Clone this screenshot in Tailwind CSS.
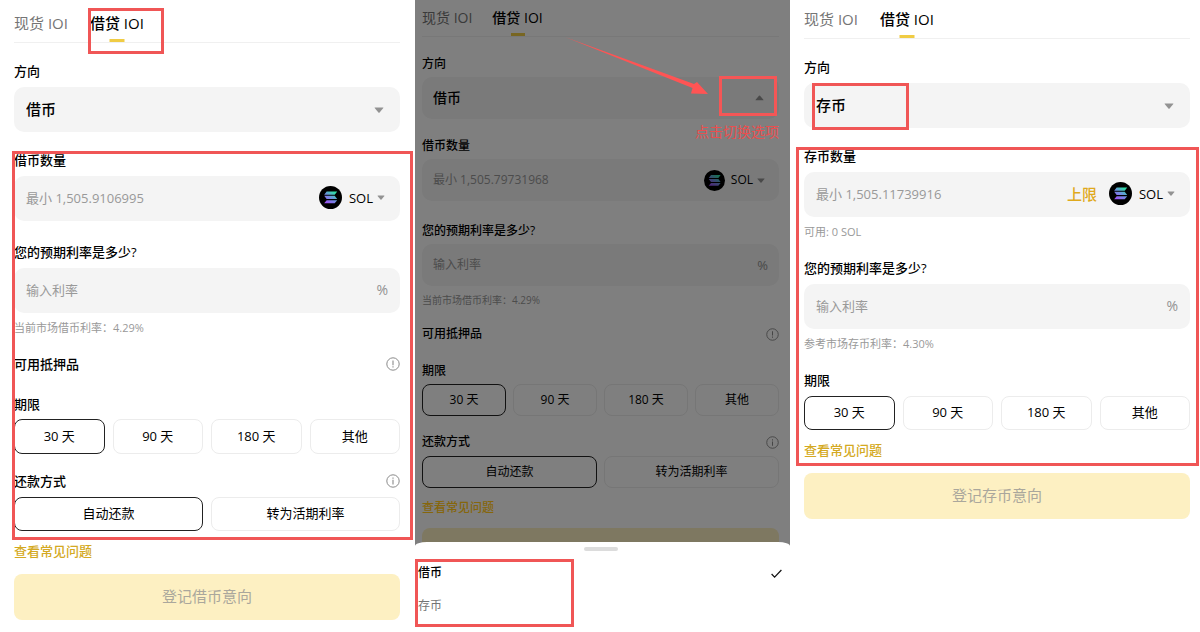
<!DOCTYPE html>
<html lang="zh-CN">
<head>
<meta charset="utf-8">
<meta name="viewport" content="width=device-width, initial-scale=1">
<title>借贷 IOI</title>
<script src="https://cdn.jsdelivr.net/npm/@tailwindcss/browser@4"></script>
</head>
<body class="bg-white font-['Open_Sans','Noto_Sans_CJK_SC',sans-serif] text-[13px] leading-5 text-black">
<svg class="absolute size-0" aria-hidden="true">
  <defs>
    <linearGradient id="sol" gradientUnits="userSpaceOnUse" x1="7" y1="19" x2="17" y2="5">
      <stop offset="0.05" stop-color="#a04df5"/><stop offset="0.5" stop-color="#6f8fe0"/><stop offset="0.9" stop-color="#2fe0a6"/>
    </linearGradient>
    <symbol id="sol-logo" viewBox="0 0 24 24">
      <circle cx="12" cy="12" r="12" fill="#000"/>
      <path fill="url(#sol)" d="M8 5.8h11l-2.6 3.3h-11zM5.4 10.3h11l2.6 3.3H8zM8 14.8h11l-2.6 3.3h-11z"/>
    </symbol>
    <symbol id="caret" viewBox="0 0 10 6"><path d="M1 0.4h8q.7 0 .3.6L5.6 5.5q-.6.6-1.2 0L.7 1Q.3.4 1 .4z" fill="#929292"/></symbol>
    <symbol id="alert" viewBox="0 0 14 14"><circle cx="7" cy="7" r="6.2" fill="none" stroke="#8a8a8a"/><path d="M7 3.6v4.6M7 9.2v1.3" stroke="#8a8a8a" stroke-width="1.1"/></symbol>
    <symbol id="info" viewBox="0 0 14 14"><circle cx="7" cy="7" r="6.2" fill="none" stroke="#8a8a8a"/><path d="M7 3.5v1.3M7 5.8v4.6" stroke="#8a8a8a" stroke-width="1.1"/></symbol>
  </defs>
</svg>

<main class="grid min-h-screen grid-cols-[415fr_375fr_410fr]">

  <!-- Borrow form -->
  <section class="relative flex flex-col pr-[15px] pb-3 pl-[14px]">
    <nav class="flex gap-[22px] border-b border-[#f0f0f0] pt-[13px] text-[15px]">
      <button class="pb-[9px] text-[#757575]">现货 IOI</button>
      <button class="relative pb-[9px] font-medium">借贷 IOI<span class="absolute bottom-0 left-1/2 h-[3px] w-[15px] -translate-x-1/2 bg-[#f0cc44]"></span></button>
    </nav>

    <label for="dir1" class="mt-[18px] font-medium">方向</label>
    <div class="relative mt-[6px] flex">
      <select id="dir1" class="h-[45px] w-full appearance-none rounded-[10px] bg-[#f4f4f4] px-3 pb-0.5 text-[15px] font-medium"><option>借币</option><option>存币</option></select>
      <svg class="pointer-events-none absolute top-5 right-[16px] h-[6px] w-[10px]"><use href="#caret"/></svg>
    </div>

    <label for="amt1" class="mt-[18px] font-medium">借币数量</label>
    <div class="mt-[6px] flex h-[45px] items-center rounded-[10px] bg-[#f4f4f4] pr-[15px] pb-0.5 pl-3">
      <input id="amt1" class="min-w-0 flex-1 bg-transparent outline-none placeholder:text-[#999]" placeholder="最小 1,505.9106995">
      <button class="flex items-center font-medium"><svg class="mr-[7px] size-[23px]"><use href="#sol-logo"/></svg>SOL<svg class="ml-1 h-[5px] w-2"><use href="#caret"/></svg></button>
    </div>

    <label for="rate1" class="mt-[21px] font-medium">您的预期利率是多少?</label>
    <div class="mt-[6px] flex h-[45px] items-center rounded-[10px] bg-[#f4f4f4] px-3 pb-0.5 text-[#929292]">
      <input id="rate1" class="min-w-0 flex-1 bg-transparent outline-none placeholder:text-[#999]" placeholder="输入利率"><span class="text-[14px]">%</span>
    </div>
    <p class="mt-[7px] text-[11px] leading-4 text-[#999]">当前市场借币利率：4.29%</p>

    <div class="mt-[18px] flex items-center justify-between font-medium">可用抵押品<button aria-label="抵押品说明"><svg class="size-[14px]"><use href="#alert"/></svg></button></div>

    <h2 class="mt-5 font-medium">期限</h2>
    <div class="mt-[5px] grid grid-cols-4 gap-2">
      <button class="h-[35px] rounded-lg border border-[#222] pb-0.5">30 天</button>
      <button class="h-[35px] rounded-lg border border-[#ececec] pb-0.5">90 天</button>
      <button class="h-[35px] rounded-lg border border-[#ececec] pb-0.5">180 天</button>
      <button class="h-[35px] rounded-lg border border-[#ececec] pb-0.5">其他</button>
    </div>

    <div class="mt-[17px] flex items-center justify-between font-medium">还款方式<button aria-label="还款方式说明"><svg class="size-[14px]"><use href="#info"/></svg></button></div>
    <div class="mt-[6px] grid grid-cols-2 gap-2">
      <button class="h-[34px] rounded-lg border border-[#222] pb-0.5">自动还款</button>
      <button class="h-[34px] rounded-lg border border-[#ececec] pb-0.5">转为活期利率</button>
    </div>

    <a href="#" class="mt-[10px] self-start font-medium text-[#d4a922]">查看常见问题</a>
    <button class="mt-[13px] h-[46px] rounded-lg bg-[#fdf0c2] pb-0.5 text-[15px] text-[#aaa79c]">登记借币意向</button>

    <div class="pointer-events-none absolute top-2 left-[88px] h-[46px] w-[76px] border-3 border-[#f05656]"></div>
    <div class="pointer-events-none absolute top-[151px] right-[2px] left-3 h-[389px] border-3 border-[#f05656]"></div>
  </section>

  <!-- Borrow form behind the direction sheet -->
  <section class="relative overflow-hidden text-[12px]">
    <div class="flex flex-col pr-[11px] pl-[7px]">
      <nav class="flex gap-5 border-b border-[#f0f0f0] pt-2 text-[14px] leading-5">
        <button class="pb-2 text-[#757575]">现货 IOI</button>
        <button class="relative pb-2 font-medium">借贷 IOI<span class="absolute bottom-0 left-1/2 h-[3px] w-[14px] -translate-x-1/2 bg-[#f0cc44]"></span></button>
      </nav>

      <label for="dir2" class="mt-[17px] leading-5 font-medium">方向</label>
      <div class="relative mt-[3px] flex">
        <select id="dir2" class="h-[42px] w-full appearance-none rounded-[10px] bg-[#f4f4f4] px-[11px] text-[14px] font-medium"><option>借币</option><option>存币</option></select>
        <svg class="pointer-events-none absolute top-[18px] right-[15px] h-[6px] w-[9px] rotate-180"><use href="#caret"/></svg>
      </div>

      <label for="amt2" class="mt-[17px] leading-5 font-medium">借币数量</label>
      <div class="mt-[3px] flex h-[42px] items-center rounded-[10px] bg-[#f4f4f4] pr-[14px] pl-[11px]">
        <input id="amt2" class="min-w-0 flex-1 bg-transparent outline-none placeholder:text-[#999]" placeholder="最小 1,505.79731968">
        <button class="flex items-center font-medium"><svg class="mr-[6px] size-[21px]"><use href="#sol-logo"/></svg>SOL<svg class="ml-1 h-[5px] w-2"><use href="#caret"/></svg></button>
      </div>

      <label for="rate2" class="mt-5 leading-5 font-medium">您的预期利率是多少?</label>
      <div class="mt-[3px] flex h-[42px] items-center rounded-[10px] bg-[#f4f4f4] px-[11px] text-[#929292]">
        <input id="rate2" class="min-w-0 flex-1 bg-transparent outline-none placeholder:text-[#999]" placeholder="输入利率"><span class="text-[13px]">%</span>
      </div>
      <p class="mt-[6px] text-[10px] leading-4 text-[#999]">当前市场借币利率：4.29%</p>

      <div class="mt-4 flex items-center justify-between leading-5 font-medium">可用抵押品<button aria-label="抵押品说明"><svg class="size-[13px]" viewBox="0 0 14 14"><use href="#alert"/></svg></button></div>

      <h2 class="mt-[17px] leading-5 font-medium">期限</h2>
      <div class="mt-[3px] grid grid-cols-4 gap-[7px]">
        <button class="h-8 rounded-lg border border-[#222]">30 天</button>
        <button class="h-8 rounded-lg border border-[#ececec]">90 天</button>
        <button class="h-8 rounded-lg border border-[#ececec]">180 天</button>
        <button class="h-8 rounded-lg border border-[#ececec]">其他</button>
      </div>

      <div class="mt-4 flex items-center justify-between leading-5 font-medium">还款方式<button aria-label="还款方式说明"><svg class="size-[13px]" viewBox="0 0 14 14"><use href="#info"/></svg></button></div>
      <div class="mt-1 grid grid-cols-2 gap-[7px]">
        <button class="h-8 rounded-lg border border-[#222]">自动还款</button>
        <button class="h-8 rounded-lg border border-[#ececec]">转为活期利率</button>
      </div>

      <a href="#" class="relative z-10 mt-[10px] self-start leading-5 font-medium text-[#86660c]">查看常见问题</a>
      <button class="mt-[10px] h-[42px] rounded-lg bg-[#fdf0c2] text-[14px] text-[#aaa79c]">登记借币意向</button>
    </div>

    <div class="absolute inset-0 bg-black/50"></div>

    <div class="absolute inset-x-0 bottom-0 z-20 flex flex-col rounded-[12px_12px_0_0/4px_4px_0_0] bg-white pt-[5px] pb-4">
      <div class="mr-[3px] h-1 w-[34px] self-center rounded-full bg-[#dcdcdc]"></div>
      <button class="mt-3 flex items-center justify-between pr-[8px] pl-[3px] leading-5 font-medium">借币
        <svg class="size-[11px]" viewBox="0 0 11 11" fill="none" stroke="#111" stroke-width="1.2"><path d="M.6 6l3 3.2L10.4 2"/></svg></button>
      <button class="mt-[13px] pl-[3px] text-left leading-5 text-[#757575]">存币</button>
    </div>

    <svg class="pointer-events-none absolute top-9 left-[150px] z-20 h-[62px] w-[146px]" viewBox="0 0 146 62" fill="#ff5454"><path d="M0 1L129 48L132 46L143 58L126 57.500L127.500 52z"/></svg>
    <div class="pointer-events-none absolute top-[76px] right-[13px] z-20 h-10 w-[58px] border-3 border-[#f55656]"></div>
    <p class="absolute top-[122px] right-[11px] z-20 text-[14px] leading-5 text-[#e94f4f]">点击切换选项</p>
    <div class="pointer-events-none absolute bottom-[5px] left-0 z-20 h-[68px] w-[159px] border-3 border-[#f05656]"></div>
  </section>

  <!-- Deposit form -->
  <section class="relative flex flex-col pr-[10px] pb-3 pl-[14px]">
    <nav class="flex gap-[22px] border-b border-[#f0f0f0] pt-[9px] text-[15px]">
      <button class="pb-[9px] text-[#757575]">现货 IOI</button>
      <button class="relative pb-[9px] font-medium">借贷 IOI<span class="absolute bottom-0 left-1/2 h-[3px] w-[15px] -translate-x-1/2 bg-[#f0cc44]"></span></button>
    </nav>

    <label for="dir3" class="mt-[18px] font-medium">方向</label>
    <div class="relative mt-[6px] flex">
      <select id="dir3" class="h-[45px] w-full appearance-none rounded-[10px] bg-[#f4f4f4] px-3 pb-0.5 text-[15px] font-medium"><option>存币</option><option>借币</option></select>
      <svg class="pointer-events-none absolute top-5 right-[16px] h-[6px] w-[10px]"><use href="#caret"/></svg>
    </div>

    <label for="amt3" class="mt-[18px] font-medium">存币数量</label>
    <div class="mt-[6px] flex h-[45px] items-center rounded-[10px] bg-[#f4f4f4] pr-[15px] pb-0.5 pl-3">
      <input id="amt3" class="min-w-0 flex-1 bg-transparent outline-none placeholder:text-[#999]" placeholder="最小 1,505.11739916">
      <button class="mr-3 text-[15px] font-medium text-[#dfa91c]">上限</button>
      <button class="flex items-center font-medium"><svg class="mr-[7px] size-[23px]"><use href="#sol-logo"/></svg>SOL<svg class="ml-1 h-[5px] w-2"><use href="#caret"/></svg></button>
    </div>
    <p class="mt-[7px] text-[11px] leading-4 text-[#999]">可用: 0 SOL</p>

    <label for="rate3" class="mt-[18px] font-medium">您的预期利率是多少?</label>
    <div class="mt-[6px] flex h-[45px] items-center rounded-[10px] bg-[#f4f4f4] px-3 pb-0.5 text-[#929292]">
      <input id="rate3" class="min-w-0 flex-1 bg-transparent outline-none placeholder:text-[#999]" placeholder="输入利率"><span class="text-[14px]">%</span>
    </div>
    <p class="mt-[7px] text-[11px] leading-4 text-[#999]">参考市场存币利率：4.30%</p>

    <h2 class="mt-[18px] font-medium">期限</h2>
    <div class="mt-[6px] grid grid-cols-4 gap-2">
      <button class="h-[34px] rounded-lg border border-[#222] pb-0.5">30 天</button>
      <button class="h-[34px] rounded-lg border border-[#ececec] pb-0.5">90 天</button>
      <button class="h-[34px] rounded-lg border border-[#ececec] pb-0.5">180 天</button>
      <button class="h-[34px] rounded-lg border border-[#ececec] pb-0.5">其他</button>
    </div>

    <a href="#" class="mt-[10px] self-start font-medium text-[#d4a922]">查看常见问题</a>
    <button class="mt-[13px] h-[46px] rounded-lg bg-[#fdf0c2] pb-0.5 text-[15px] text-[#aaa79c]">登记存币意向</button>

    <div class="pointer-events-none absolute top-[83px] left-[22px] h-[47px] w-[97px] border-3 border-[#f05656]"></div>
    <div class="pointer-events-none absolute top-[147px] right-px left-[6px] h-[319px] border-3 border-[#f05656]"></div>
  </section>
</main>
</body>
</html>
